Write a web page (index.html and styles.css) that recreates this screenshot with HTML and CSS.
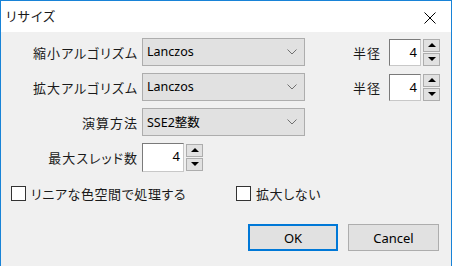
FILE: index.html
```html
<!DOCTYPE html>
<html>
<head>
<meta charset="utf-8">
<link rel="stylesheet" href="styles.css">
</head>
<body>
<div class="window">
  <div class="titlebar">
    <span class="title">リサイズ</span>
    <svg class="close" width="12" height="12" viewBox="0 0 12 12"><path d="M0.5 0.5 L11.5 11.5 M11.5 0.5 L0.5 11.5" stroke="#000" stroke-width="1" fill="none"/></svg>
  </div>
  <div class="content">
    <div class="row">
      <span class="label">縮小アルゴリズム</span>
      <div class="combo"><span>Lanczos</span><svg class="chev" width="10" height="6" viewBox="0 0 10 6"><path d="M0.5 0.5 L5 5 L9.5 0.5" stroke="#707070" fill="none"/></svg></div>
      <span class="spinlabel">半径</span>
      <div class="spin"><div class="num wide">4</div><div class="btns"><div class="sb"><span class="up"></span></div><div class="sb"><span class="down"></span></div></div></div>
    </div>
    <div class="row">
      <span class="label">拡大アルゴリズム</span>
      <div class="combo"><span>Lanczos</span><svg class="chev" width="10" height="6" viewBox="0 0 10 6"><path d="M0.5 0.5 L5 5 L9.5 0.5" stroke="#707070" fill="none"/></svg></div>
      <span class="spinlabel">半径</span>
      <div class="spin"><div class="num wide">4</div><div class="btns"><div class="sb"><span class="up"></span></div><div class="sb"><span class="down"></span></div></div></div>
    </div>
    <div class="row">
      <span class="label">演算方法</span>
      <div class="combo"><span>SSE2整数</span><svg class="chev" width="10" height="6" viewBox="0 0 10 6"><path d="M0.5 0.5 L5 5 L9.5 0.5" stroke="#707070" fill="none"/></svg></div>
    </div>
    <div class="row">
      <span class="label">最大スレッド数</span>
      <div class="spin"><div class="num threads">4</div><div class="btns"><div class="sb"><span class="up"></span></div><div class="sb"><span class="down"></span></div></div></div>
    </div>
    <div class="checks">
      <label class="check first"><span class="box"></span><span class="jp">リニアな色空間で処理する</span></label>
      <label class="check second"><span class="box"></span><span class="jp">拡大しない</span></label>
    </div>
    <div class="buttons">
      <div class="btn ok">OK</div>
      <div class="btn">Cancel</div>
    </div>
  </div>
</div>
</body>
</html>
```
FILE: styles.css
```css
html, body {
  margin: 0;
  padding: 0;
}
body {
  font-family: "Noto Sans", "Noto Sans CJK JP", sans-serif;
  font-size: 12.5px;
  color: #000;
  background: #f0f0f0;
}
.window {
  width: 452px;
  height: 266px;
  box-sizing: border-box;
  border: 1px solid #1883d7;
  border-bottom: none;
  background: #f0f0f0;
  display: flex;
  flex-direction: column;
}
.titlebar {
  height: 31px;
  background: #fff;
  display: flex;
  align-items: center;
  justify-content: space-between;
  padding: 0 15px 0 5px;
}
.title,
.label,
.spinlabel,
.jp {
  font-family: "Noto Sans CJK JP", sans-serif;
  font-size: 13px;
  letter-spacing: 1px;
  font-feature-settings: "palt";
  color: #1a1a1a;
}
.jp {
  letter-spacing: 0.6px;
}
.title {
  margin-top: -2px;
}
.close {
  display: block;
  margin-top: 2px;
}
.content {
  padding-top: 6px;
  display: flex;
  flex-direction: column;
}
.row {
  display: flex;
  align-items: center;
  height: 28px;
  margin-bottom: 7px;
}
.label {
  width: 137px;
  margin-right: 4px;
  text-align: right;
}
.combo {
  width: 163px;
  height: 28px;
  box-sizing: border-box;
  background: #e1e1e1;
  border: 1px solid #adadad;
  display: flex;
  align-items: center;
  justify-content: space-between;
  padding: 0 7px 0 4px;
}
.combo span {
  margin-top: -1px;
}
.chev {
  display: block;
}
.spinlabel {
  margin-left: 48px;
  width: 36px;
}
.spin {
  display: flex;
  align-items: center;
  gap: 2px;
}
.num {
  height: 28px;
  box-sizing: border-box;
  background: #fff;
  border: 1px solid #7a7a7a;
  border-right-color: #c8c8c8;
  border-bottom-color: #c8c8c8;
  text-align: right;
  padding-right: 3px;
  line-height: 25px;
  font-size: 13px;
}
.num.wide {
  width: 32px;
  height: 27px;
}
.num.threads {
  width: 42px;
  height: 29px;
}
.btns {
  display: flex;
  flex-direction: column;
  gap: 1px;
}
.sb {
  width: 17px;
  height: 13px;
  box-sizing: border-box;
  background: #e1e1e1;
  border: 1px solid #adadad;
  display: flex;
  align-items: center;
  justify-content: center;
}
.up, .down {
  width: 0;
  height: 0;
  border-left: 4px solid transparent;
  border-right: 4px solid transparent;
}
.up {
  border-bottom: 4px solid #000;
}
.down {
  border-top: 4px solid #000;
}
.checks {
  display: flex;
  align-items: center;
  margin-top: 8px;
  height: 15px;
}
.check {
  display: flex;
  align-items: center;
}
.check.first {
  margin-left: 10px;
  width: 225px;
}
.box {
  width: 15px;
  height: 15px;
  box-sizing: border-box;
  border: 1px solid #333;
  background: #fff;
  margin-right: 5px;
}
.buttons {
  display: flex;
  justify-content: flex-end;
  gap: 10px;
  padding-right: 12px;
  margin-top: 23px;
}
.btn {
  width: 91px;
  height: 27px;
  box-sizing: border-box;
  background: #e1e1e1;
  border: 1px solid #adadad;
  display: flex;
  align-items: center;
  justify-content: center;
  font-size: 13px;
}
.btn.ok {
  width: 90px;
  border: 2px solid #0078d7;
}
```
